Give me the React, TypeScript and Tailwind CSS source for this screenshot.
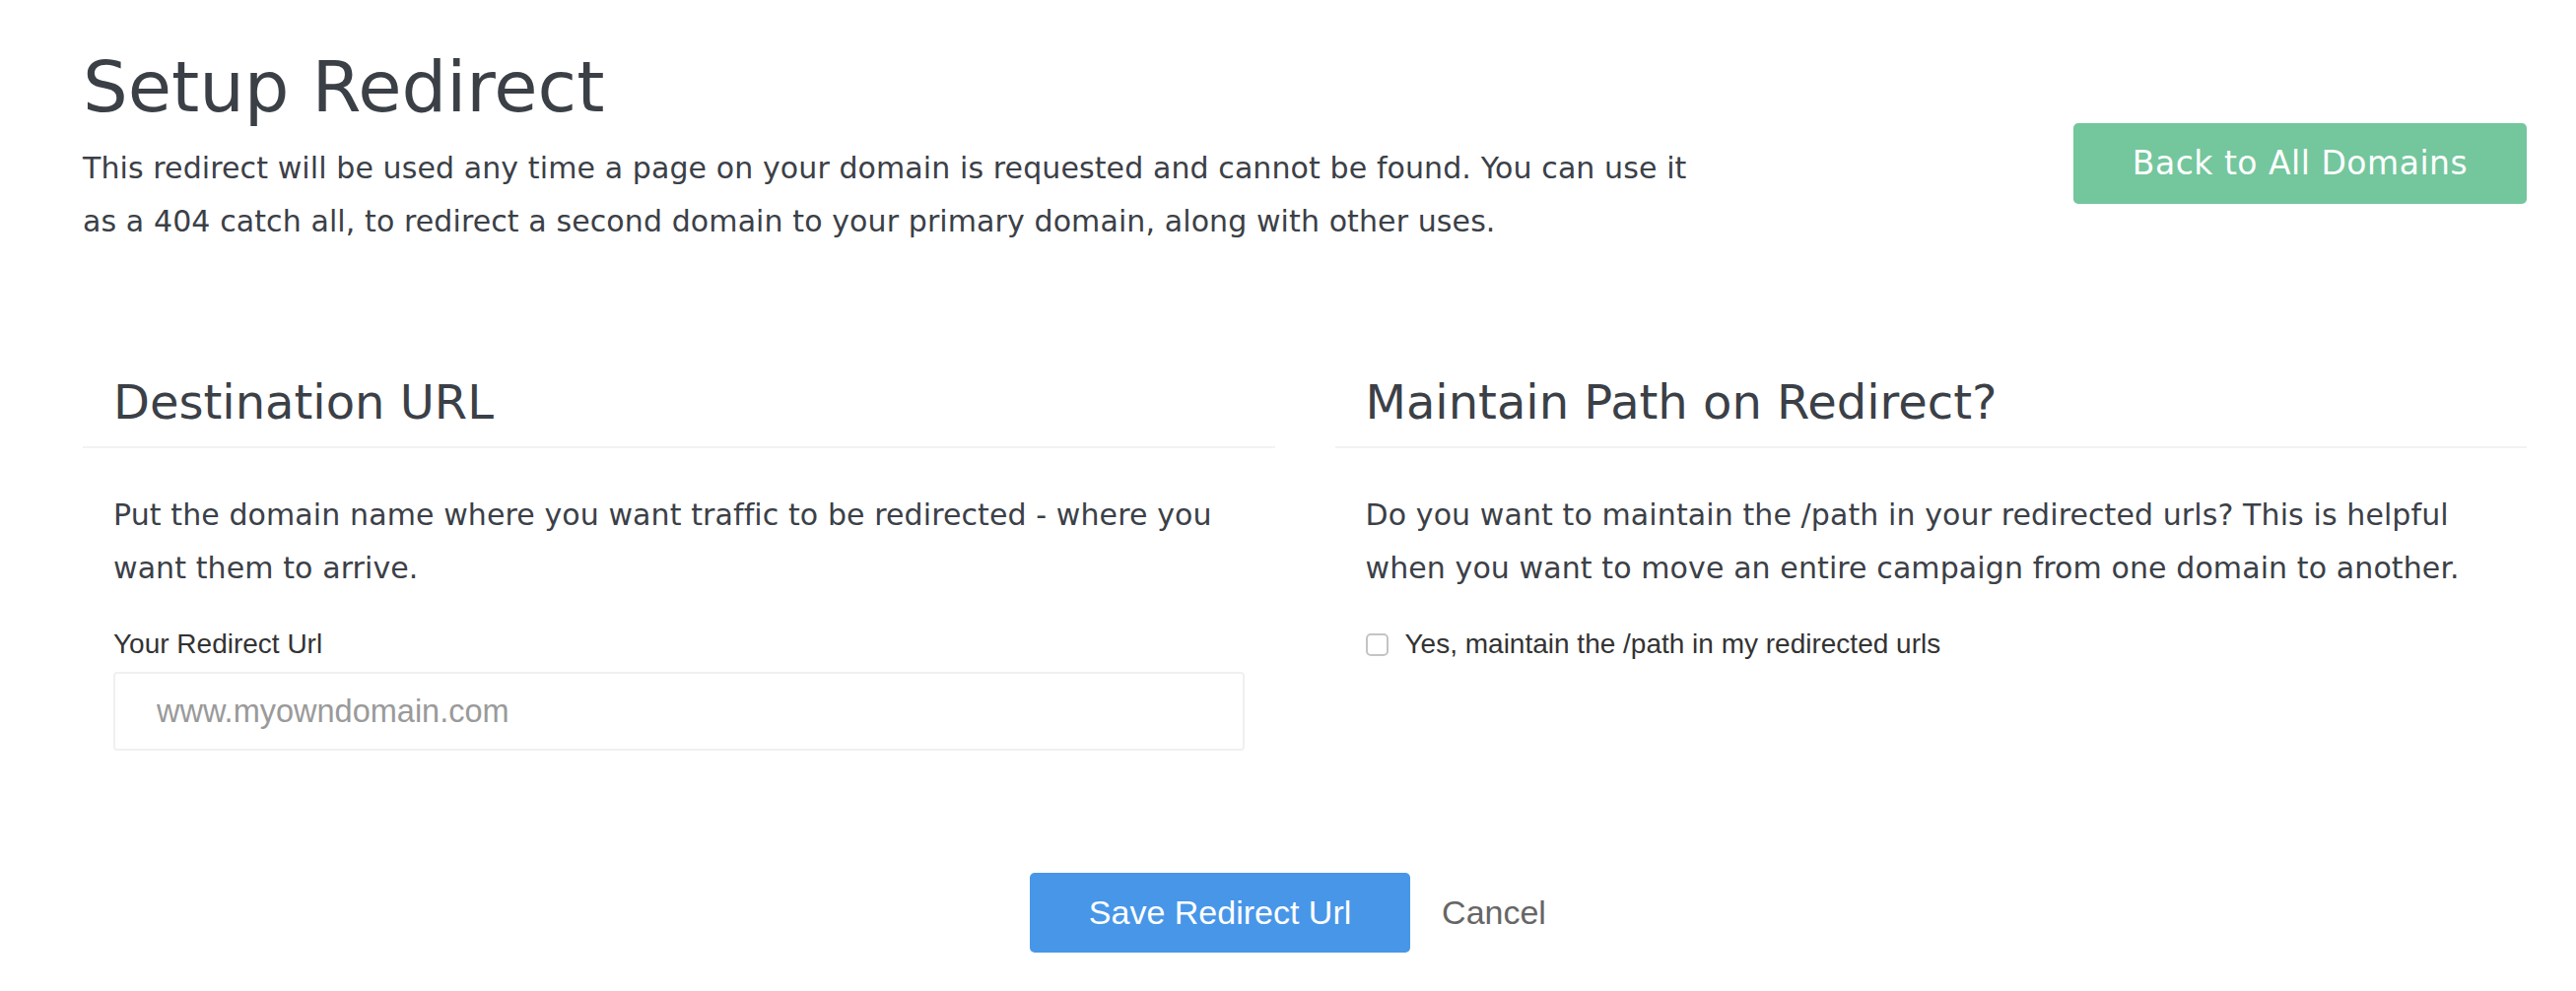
import { useState } from "react";

const heading = "font-['DejaVu_Sans',sans-serif] text-[#3b4047]";
const body = `${heading} text-[30px] leading-[54px] tracking-[0.1px]`;
const helv = "font-['Liberation_Sans',Arial,sans-serif]";

const SectionCard = ({
  title,
  children,
}: {
  title: string;
  children: React.ReactNode;
}) => {
  return (
    <div className="">
      <h2
        className={`${heading} text-[48px] leading-[56px] px-[31px] pb-[17px] border-b-2 border-[#f2f2f2]`}
      >
        {title}
      </h2>
      <div className="px-[31px] pt-[41px]">{children}</div>
    </div>
  );
};

const App = () => {
  const [url, setUrl] = useState("");
  const [keepPath, setKeepPath] = useState(false);

  return (
    <div className="w-full h-[1006px] bg-white pl-[84px] pr-[50px] overflow-hidden">
      {/* page header */}
      <div className="flex justify-between items-start">
        <div className="pt-[48px]">
          <h1 className={`${heading} text-[72px] leading-[80px]`}>
            Setup Redirect
          </h1>
          <p className={`${body} mt-[16px] max-w-[1645px]`}>
            This redirect will be used any time a page on your domain is
            requested and cannot be found. You can use it as a 404 catch all,
            to redirect a second domain to your primary domain, along with
            other uses.
          </p>
        </div>
        <button
          className={`${heading} mt-[125px] w-[460px] h-[82px] rounded-[5px] bg-[#74c69d] text-white text-[33px] tracking-[0.5px] shrink-0`}
        >
          Back to All Domains
        </button>
      </div>

      {/* form sections */}
      <div className="grid grid-cols-2 gap-[61px] mt-[128px]">
        <SectionCard title="Destination URL">
          <p className={body}>
            Put the domain name where you want traffic to be redirected - where
            you want them to arrive.
          </p>
          <label
            className={`${helv} block text-[28px] leading-[32px] text-[#333] mt-[34px]`}
          >
            Your Redirect Url
          </label>
          <input
            value={url}
            onChange={(e) => setUrl(e.target.value)}
            placeholder="www.myowndomain.com"
            className={`${helv} mt-[12px] w-full h-[80px] border-2 border-[#f0f0f0] rounded-[4px] pl-[42px] text-[32.5px] text-[#333] placeholder:text-[#9a9a9a] outline-none`}
          />
        </SectionCard>

        <SectionCard title="Maintain Path on Redirect?">
          <p className={body}>
            Do you want to maintain the /path in your redirected urls? This is
            helpful when you want to move an entire campaign from one domain to
            another.
          </p>
          <label className="flex items-center mt-[34px] cursor-pointer">
            <span
              onClick={() => setKeepPath(!keepPath)}
              className={`w-[23px] h-[23px] rounded-[5px] border-2 border-[#c4c4c4] bg-white shrink-0 ${
                keepPath ? "bg-[#4796e8] border-[#4796e8]" : ""
              }`}
            ></span>
            <span
              className={`${helv} ml-[17px] text-[28px] leading-[32px] text-[#333]`}
            >
              Yes, maintain the /path in my redirected urls
            </span>
          </label>
        </SectionCard>
      </div>

      {/* actions */}
      <div className="flex justify-center items-center mt-[124px] -ml-[34px]">
        <button
          className={`${helv} w-[386px] h-[81px] rounded-[5px] bg-[#4796e8] text-white text-[34px]`}
        >
          Save Redirect Url
        </button>
        <button className={`${helv} ml-[32px] text-[34px] text-[#666]`}>
          Cancel
        </button>
      </div>
    </div>
  );
};

export default App;
